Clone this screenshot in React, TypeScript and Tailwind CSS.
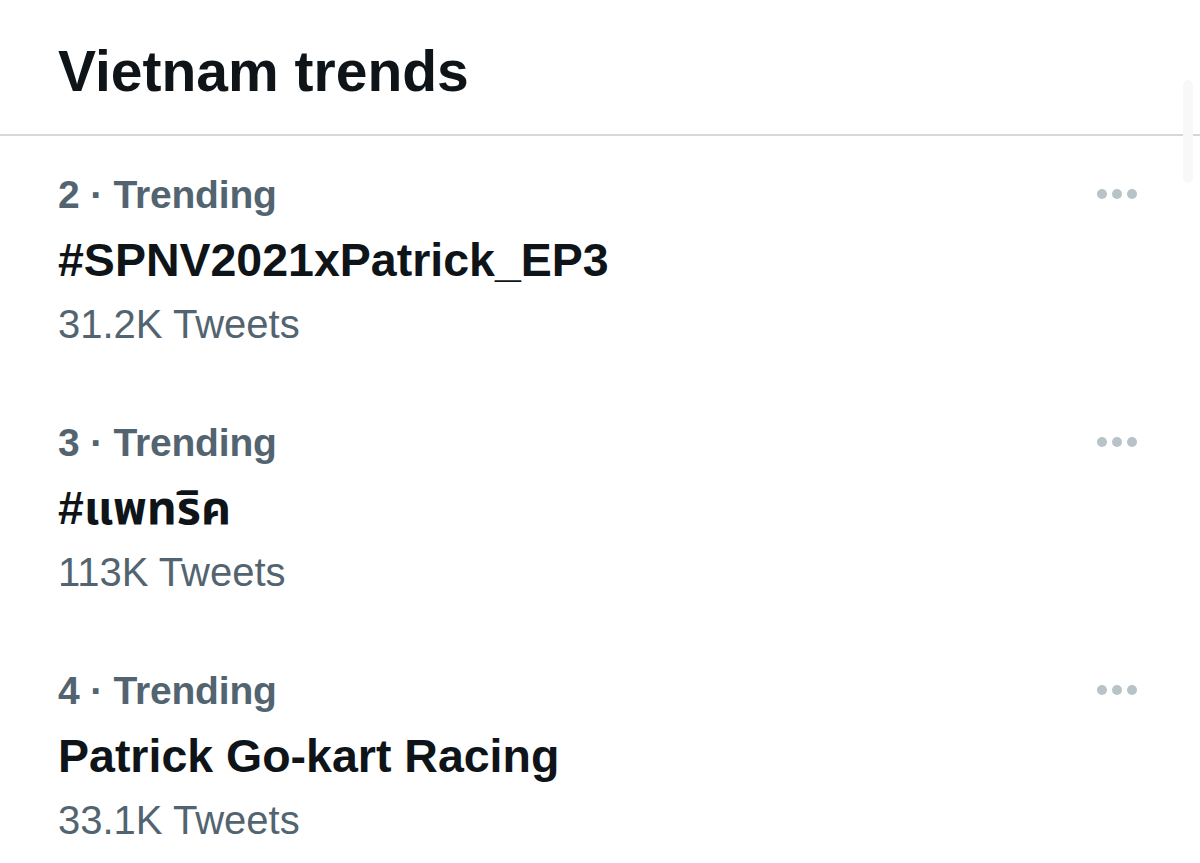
import React from 'react';

type Trend = {
  rank: number;
  name: string;
  tweets: string;
};

const trends: Trend[] = [
  { rank: 2, name: '#SPNV2021xPatrick_EP3', tweets: '31.2K Tweets' },
  { rank: 3, name: '#แพทริค', tweets: '113K Tweets' },
  { rank: 4, name: 'Patrick Go-kart Racing', tweets: '33.1K Tweets' },
];

function MoreDots() {
  return (
    <div className="flex flex-row gap-[5px] mt-[17px]">
      <div className="w-[10px] h-[10px] rounded-full bg-[#b7c2c9]" />
      <div className="w-[10px] h-[10px] rounded-full bg-[#b7c2c9]" />
      <div className="w-[10px] h-[10px] rounded-full bg-[#b7c2c9]" />
    </div>
  );
}

function TrendRow({ trend }: { trend: Trend }) {
  return (
    <div className="h-[248px] pt-[36px] pl-[58px] pr-[63px] flex flex-row justify-between items-start">
      <div className="flex flex-col">
        <div className="text-[39px] leading-[46px] font-bold text-[#536471] tracking-[-0.2px]">
          {trend.rank} · Trending
        </div>
        <div className="mt-[15px] text-[46.5px] leading-[54px] font-bold text-[#0f1419]">
          {trend.name}
        </div>
        <div className="mt-[14px] text-[40px] leading-[46px] text-[#536471]">
          {trend.tweets}
        </div>
      </div>
      <MoreDots />
    </div>
  );
}

export default function App() {
  return (
    <div className="relative w-[1200px] h-[863px] overflow-hidden bg-white font-['Liberation_Sans','Noto_Sans','Noto_Sans_Thai',sans-serif]">
      <div className="h-[136px] border-b-2 border-[#d8d8d8] pt-[43px] pl-[58px]">
        <h1 className="text-[57px] leading-[56px] font-bold text-[#0f1419]">
          Vietnam trends
        </h1>
      </div>
      {/* faded scroll indicator */}
      <div className="absolute right-[7px] top-[80px] w-[10px] h-[103px] rounded-full bg-[#f8f8f8]" />
      {trends.map((t) => (
        <TrendRow key={t.rank} trend={t} />
      ))}
    </div>
  );
}
